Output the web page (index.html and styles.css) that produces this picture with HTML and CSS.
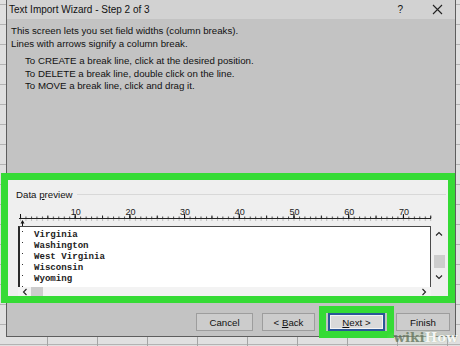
FILE: index.html
```html
<!DOCTYPE html>
<html>
<head>
<meta charset="utf-8">
<title>Text Import Wizard</title>
<link rel="stylesheet" href="styles.css">
</head>
<body>
<div class="desk">
  <div class="dialog">
    <div class="titlebar">
      <span class="title">Text Import Wizard - Step 2 of 3</span>
      <span class="help">?</span>
      <svg class="close" width="11" height="11" viewBox="0 0 11 11"><path d="M1 1L10 10M10 1L1 10" stroke="#222" stroke-width="1.1" fill="none"/></svg>
    </div>
    <div class="content">
      <p class="intro">This screen lets you set field widths (column breaks).<br>Lines with arrows signify a column break.</p>
      <p class="howto">To CREATE a break line, click at the desired position.<br>To DELETE a break line, double click on the line.<br>To MOVE a break line, click and drag it.</p>

      <div class="highlight">
        <div class="group">
          <div class="legend"><span class="legend-text">Data <u>p</u>review</span><span class="legend-line"></span></div>
          <svg class="ruler" width="414" height="20" viewBox="0 0 414 20">
            <defs>
              <pattern id="t1" x="2" y="0" width="5.47" height="20" patternUnits="userSpaceOnUse">
                <rect x="0" y="10.5" width="1" height="1.5" fill="#444"/>
                <rect x="0" y="13.5" width="1" height="1" fill="#888"/>
              </pattern>
              <pattern id="t5" x="2" y="0" width="27.35" height="20" patternUnits="userSpaceOnUse">
                <rect x="0" y="9.5" width="1" height="3" fill="#222"/>
              </pattern>
              <pattern id="t10" x="2" y="0" width="54.7" height="20" patternUnits="userSpaceOnUse">
                <rect x="0" y="8" width="1" height="4.5" fill="#111"/>
              </pattern>
            </defs>
            <rect x="1" y="12" width="412" height="1" fill="#222"/>
            <rect x="0" y="0" width="414" height="20" fill="url(#t1)"/>
            <rect x="0" y="0" width="414" height="20" fill="url(#t5)"/>
            <rect x="0" y="0" width="414" height="20" fill="url(#t10)"/>
            <g class="nums" font-family="Liberation Sans, Arial, sans-serif" font-size="9" fill="#222" text-anchor="middle">
              <text x="57.7" y="8.5">10</text>
              <text x="112.4" y="8.5">20</text>
              <text x="167.1" y="8.5">30</text>
              <text x="221.8" y="8.5">40</text>
              <text x="276.5" y="8.5">50</text>
              <text x="331.2" y="8.5">60</text>
              <text x="385.9" y="8.5">70</text>
            </g>
            <path d="M2.5 17.5L4.5 14L6.5 17.5Z" fill="#111"/>
            <rect x="4" y="16" width="1" height="4" fill="#111"/>
          </svg>
          <div class="preview-row">
            <div class="pbox">
              <div class="rows">
                <div class="row">Virginia</div>
                <div class="row">Washington</div>
                <div class="row">West Virginia</div>
                <div class="row">Wisconsin</div>
                <div class="row">Wyoming</div>
              </div>
            </div>
            <div class="vscroll">
              <svg width="8" height="6" viewBox="0 0 8 6"><path d="M1 4.5L4 1.5L7 4.5" stroke="#222" stroke-width="1.1" fill="none"/></svg>
              <span class="vthumb"></span>
              <svg width="8" height="6" viewBox="0 0 8 6"><path d="M1 1.5L4 4.5L7 1.5" stroke="#222" stroke-width="1.1" fill="none"/></svg>
            </div>
          </div>
          <div class="hscroll">
            <svg width="6" height="8" viewBox="0 0 6 8"><path d="M4.5 1L1.5 4L4.5 7" stroke="#222" stroke-width="1.1" fill="none"/></svg>
            <span class="hthumb"></span>
            <span class="hfill"></span>
            <svg width="6" height="8" viewBox="0 0 6 8"><path d="M1.5 1L4.5 4L1.5 7" stroke="#222" stroke-width="1.1" fill="none"/></svg>
          </div>
        </div>
      </div>

      <div class="buttons">
        <button class="btn btn-cancel">Cancel</button>
        <button class="btn btn-back">&lt; <u>B</u>ack</button>
        <span class="next-hl"><button class="btn btn-next"><u>N</u>ext &gt;</button></span>
        <button class="btn btn-finish">Finish</button>
      </div>
    </div>
  </div>
  <div class="watermark"><span class="wm-wiki">wiki</span><span class="wm-how">How</span></div>
</div>
</body>
</html>
```

FILE: styles.css
```css
* { box-sizing: border-box; }
html, body { margin: 0; padding: 0; }
body {
  width: 460px;
  height: 346px;
  overflow: hidden;
  font-family: "Liberation Sans", Arial, sans-serif;
  color: #111;
}
.desk {
  position: relative;
  width: 460px;
  height: 346px;
  padding-left: 6px;
  background-color: #e0e0e0;
  background-image:
    linear-gradient(to right, #a5a5a5 1px, transparent 1px),
    linear-gradient(to bottom, #b3b3b3 1px, transparent 1px);
  background-size: 50px 100%, 100% 20px;
  background-position: 47px 0, 0 4px;
}
.dialog {
  width: 450px;
  height: 337px;
  background: #c3c3c3;
  border: 1px solid #5e5e5e;
  border-top: none;
  display: flex;
  flex-direction: column;
}
.titlebar {
  height: 19px;
  flex: none;
  background: #d2d2d2;
  display: flex;
  align-items: center;
  padding-left: 2px;
  font-size: 10px;
}
.title { flex: 1; }
.help { font-size: 10px; margin-right: 29px; }
.close { margin-right: 12px; }

.content { flex: 1; display: flex; flex-direction: column; }
.intro {
  margin: 5px 0 0 4px;
  font-size: 9.7px;
  line-height: 13px;
}
.howto {
  margin: 5px 0 0 18px;
  font-size: 9.7px;
  line-height: 12.5px;
  height: 38px;
}
.highlight {
  margin: 80px 0 0 -6px;
  width: 454px;
  height: 130px;
  border: 7px solid #35db35;
  background: #efefef;
}
.group { padding-top: 8px; }
.legend {
  display: flex;
  align-items: center;
  height: 12px;
  padding-left: 8px;
  font-size: 9.7px;
}
.legend-text { padding-right: 4px; }
.legend-line { flex: 1; height: 1px; background: #d8d8d8; margin-right: 2px; }
.ruler { display: block; margin: 6px 0 0 10px; }
.preview-row { display: flex; margin-left: 10px; height: 61px; }
.pbox {
  width: 413px;
  height: 61px;
  background: #fff;
  border-left: 2px solid #2a2a2a;
  border-top: 1px solid #4a4a4a;
  border-right: 1px solid #4a4a4a;
}
.rows {
  height: 100%;
  padding: 2px 0 0 14px;
  background-image: repeating-linear-gradient(to bottom, #333 0 1px, transparent 1px 11px);
  background-size: 1px 100%;
  background-position: 2px 4px;
  background-repeat: no-repeat;
}
.row {
  font-family: "Liberation Mono", "Courier New", monospace;
  font-weight: bold;
  font-size: 9.1px;
  line-height: 11px;
  color: #222;
  white-space: pre;
}
.vscroll {
  width: 16px;
  display: flex;
  flex-direction: column;
  align-items: center;
  padding-top: 5px;
}
.vthumb { display: block; width: 11px; height: 13px; background: #cdcdcd; margin: 18px 0 6px 1px; }
.hscroll {
  display: flex;
  align-items: center;
  margin-left: 10px;
  width: 413px;
  height: 9px;
  background: #f3f3f3;
  padding-left: 4px;
}
.hthumb { width: 12px; height: 9px; background: #cdcdcd; margin-left: 3px; }
.hfill { flex: 1; }
.hscroll svg:last-child { margin-right: 4px; }

.buttons {
  display: flex;
  justify-content: flex-end;
  align-items: center;
  margin-top: 10px;
  padding-right: 5px;
  height: 18px;
}
.btn {
  height: 18px;
  padding: 0;
  font-family: "Liberation Sans", Arial, sans-serif;
  font-size: 9.7px;
  color: #111;
  background: #cccccc;
  border: 1px solid #9d9d9d;
  border-radius: 0;
}
.btn-cancel { width: 57px; margin-right: 9px; }
.btn-back { width: 53px; margin-right: 4px; }
.next-hl {
  display: flex;
  border: 7px solid #35db35;
  padding: 0 2px;
  margin: -7px 2px -7px 0;
}
.btn-next {
  width: 57px;
  background: #d9d9d9;
  border: 2px solid #2b5797;
  box-shadow: inset 0 0 0 1px #f4f4f4;
}
.btn-finish { width: 54px; }

.watermark {
  position: absolute;
  right: 2px;
  bottom: 0;
  height: 17px;
  padding: 0 0 0 6px;
  white-space: nowrap;
  font-family: "DejaVu Serif", "Liberation Serif", serif;
  font-weight: bold;
  font-size: 13.5px;
  line-height: 16px;
  background: radial-gradient(ellipse at center, rgba(205,225,195,0.55), rgba(205,225,195,0) 75%);
}
.wm-wiki { color: rgba(95,112,88,0.75); }
.wm-how { color: rgba(255,255,255,0.92); text-shadow: 0 0 1px rgba(120,140,110,0.6); }
```
